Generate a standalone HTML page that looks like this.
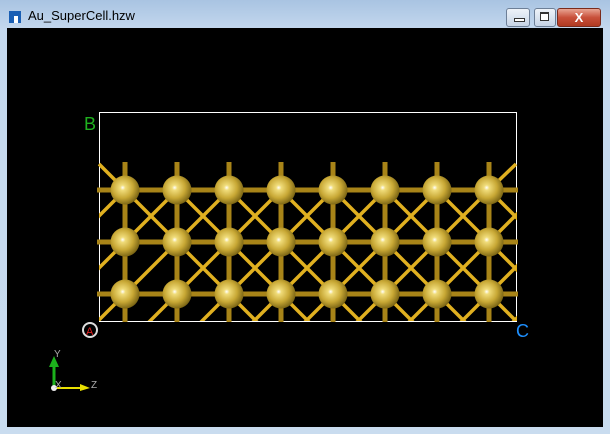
<!DOCTYPE html>
<html style="overflow:hidden"><head><style>
html,body{margin:0;width:610px;height:434px;overflow:hidden}
body{background:#b9d1ea;font-family:"Liberation Sans",sans-serif;position:relative}
.frame{position:absolute;left:0;top:0;width:610px;height:434px;background:linear-gradient(#a9c4e2,#c4d8ee 30px,#c9dcef);}
.canvas{position:absolute;left:7px;top:28px;width:596px;height:399px;background:#000}
.title{position:absolute;left:28px;top:8px;font-size:13px;color:#000}
.btn{position:absolute;top:8px;height:17px;border:1px solid #6d7f97;border-radius:3px;background:linear-gradient(#eef3f9,#c6d4e6)}
</style></head><body>
<div class="frame"></div>
<div style="position:absolute;left:9px;top:11px;width:12px;height:12px;background:#1a5fb4"></div>
<div style="position:absolute;left:14px;top:16px;width:4px;height:7px;background:#fff"></div>
<div class="title">Au_SuperCell.hzw</div>
<div class="btn" style="left:506px;width:22px"><div style="position:absolute;left:7px;top:9px;width:9px;height:2px;border:1px solid #333;background:#fff"></div></div>
<div class="btn" style="left:534px;width:20px"><div style="position:absolute;left:5px;top:3px;width:7px;height:6px;border:1px solid #333;border-top-width:2px;background:#fff"></div></div>
<div class="btn" style="left:557px;width:42px;background:linear-gradient(#e9a593,#c8503a 50%,#b13a22);border-color:#7a2b1c;color:#fff;font-weight:bold;font-size:13px;text-align:center;line-height:17px">X</div>
<div class="canvas"></div>
<svg style="position:absolute;left:0;top:0" width="610" height="434">
<defs>
<radialGradient id="g" cx="0.42" cy="0.42" r="0.6">
<stop offset="0" stop-color="#ffffff"/><stop offset="0.15" stop-color="#f0dc7a"/><stop offset="0.6" stop-color="#c8a835"/><stop offset="1" stop-color="#7a6414"/>
</radialGradient>
<clipPath id="c"><rect x="99" y="190" width="418" height="131"/></clipPath>
</defs>
<rect x="99.5" y="112.5" width="417" height="209" fill="none" stroke="#fff" stroke-width="1"/>
<g stroke="#e0b020" stroke-width="3.5" clip-path="url(#c)">
<path d="M-300 -235 L700 765 M-248 -235 L752 765 M-196 -235 L804 765 M-144 -235 L856 765 M-92 -235 L908 765 M-40 -235 L960 765 M12 -235 L1012 765 M64 -235 L1064 765 M116 -235 L1116 765 M168 -235 L1168 765 M220 -235 L1220 765 M272 -235 L1272 765 M324 -235 L1324 765 M376 -235 L1376 765 M428 -235 L1428 765 M480 -235 L1480 765"/>
<path d="M-105 420 L420 -105 M-53 420 L472 -105 M-1 420 L524 -105 M51 420 L576 -105 M103 420 L628 -105 M155 420 L680 -105 M207 420 L732 -105 M259 420 L784 -105 M311 420 L836 -105 M363 420 L888 -105 M415 420 L940 -105 M467 420 L992 -105 M519 420 L1044 -105 M571 420 L1096 -105 M623 420 L1148 -105"/>
</g>
<path d="M99 164L125 190M516 164L489 190" stroke="#e0b020" stroke-width="3.5"/>
<g stroke="#a88418" stroke-width="5">
<path d="M97 190H518M97 242H518M97 294H518"/>
<path d="M125 162V322M177 162V322M229 162V322M281 162V322M333 162V322M385 162V322M437 162V322M489 162V322"/>
</g>
<g fill="url(#g)">
<g id="r"><circle cx="125" cy="190" r="14.5"/><circle cx="177" cy="190" r="14.5"/><circle cx="229" cy="190" r="14.5"/><circle cx="281" cy="190" r="14.5"/><circle cx="333" cy="190" r="14.5"/><circle cx="385" cy="190" r="14.5"/><circle cx="437" cy="190" r="14.5"/><circle cx="489" cy="190" r="14.5"/></g>
<use href="#r" y="52"/><use href="#r" y="104"/>
</g>
<text x="84" y="130" fill="#1fb01f" font-size="18" font-family="Liberation Sans">B</text>
<text x="516" y="337" fill="#1e90ff" font-size="18" font-family="Liberation Sans">C</text>
<circle cx="90" cy="330" r="7" fill="none" stroke="#ddd" stroke-width="2"/>
<text x="86" y="335" fill="#e02020" font-size="11" font-family="Liberation Sans">A</text>
<path d="M54 388V365" stroke="#1cb01c" stroke-width="3"/>
<path d="M49 367L54 356L59 367Z" fill="#1cb01c"/>
<path d="M54 388H81" stroke="#e8e000" stroke-width="2"/>
<path d="M80 384L90 388L80 391Z" fill="#e8e000"/>
<circle cx="54" cy="388" r="3" fill="#eee"/>
<g fill="#aaa" font-size="10" font-family="Liberation Sans"><text x="54" y="357">Y</text><text x="55" y="388">X</text><text x="91" y="388">Z</text></g>
</svg>
</body></html>
